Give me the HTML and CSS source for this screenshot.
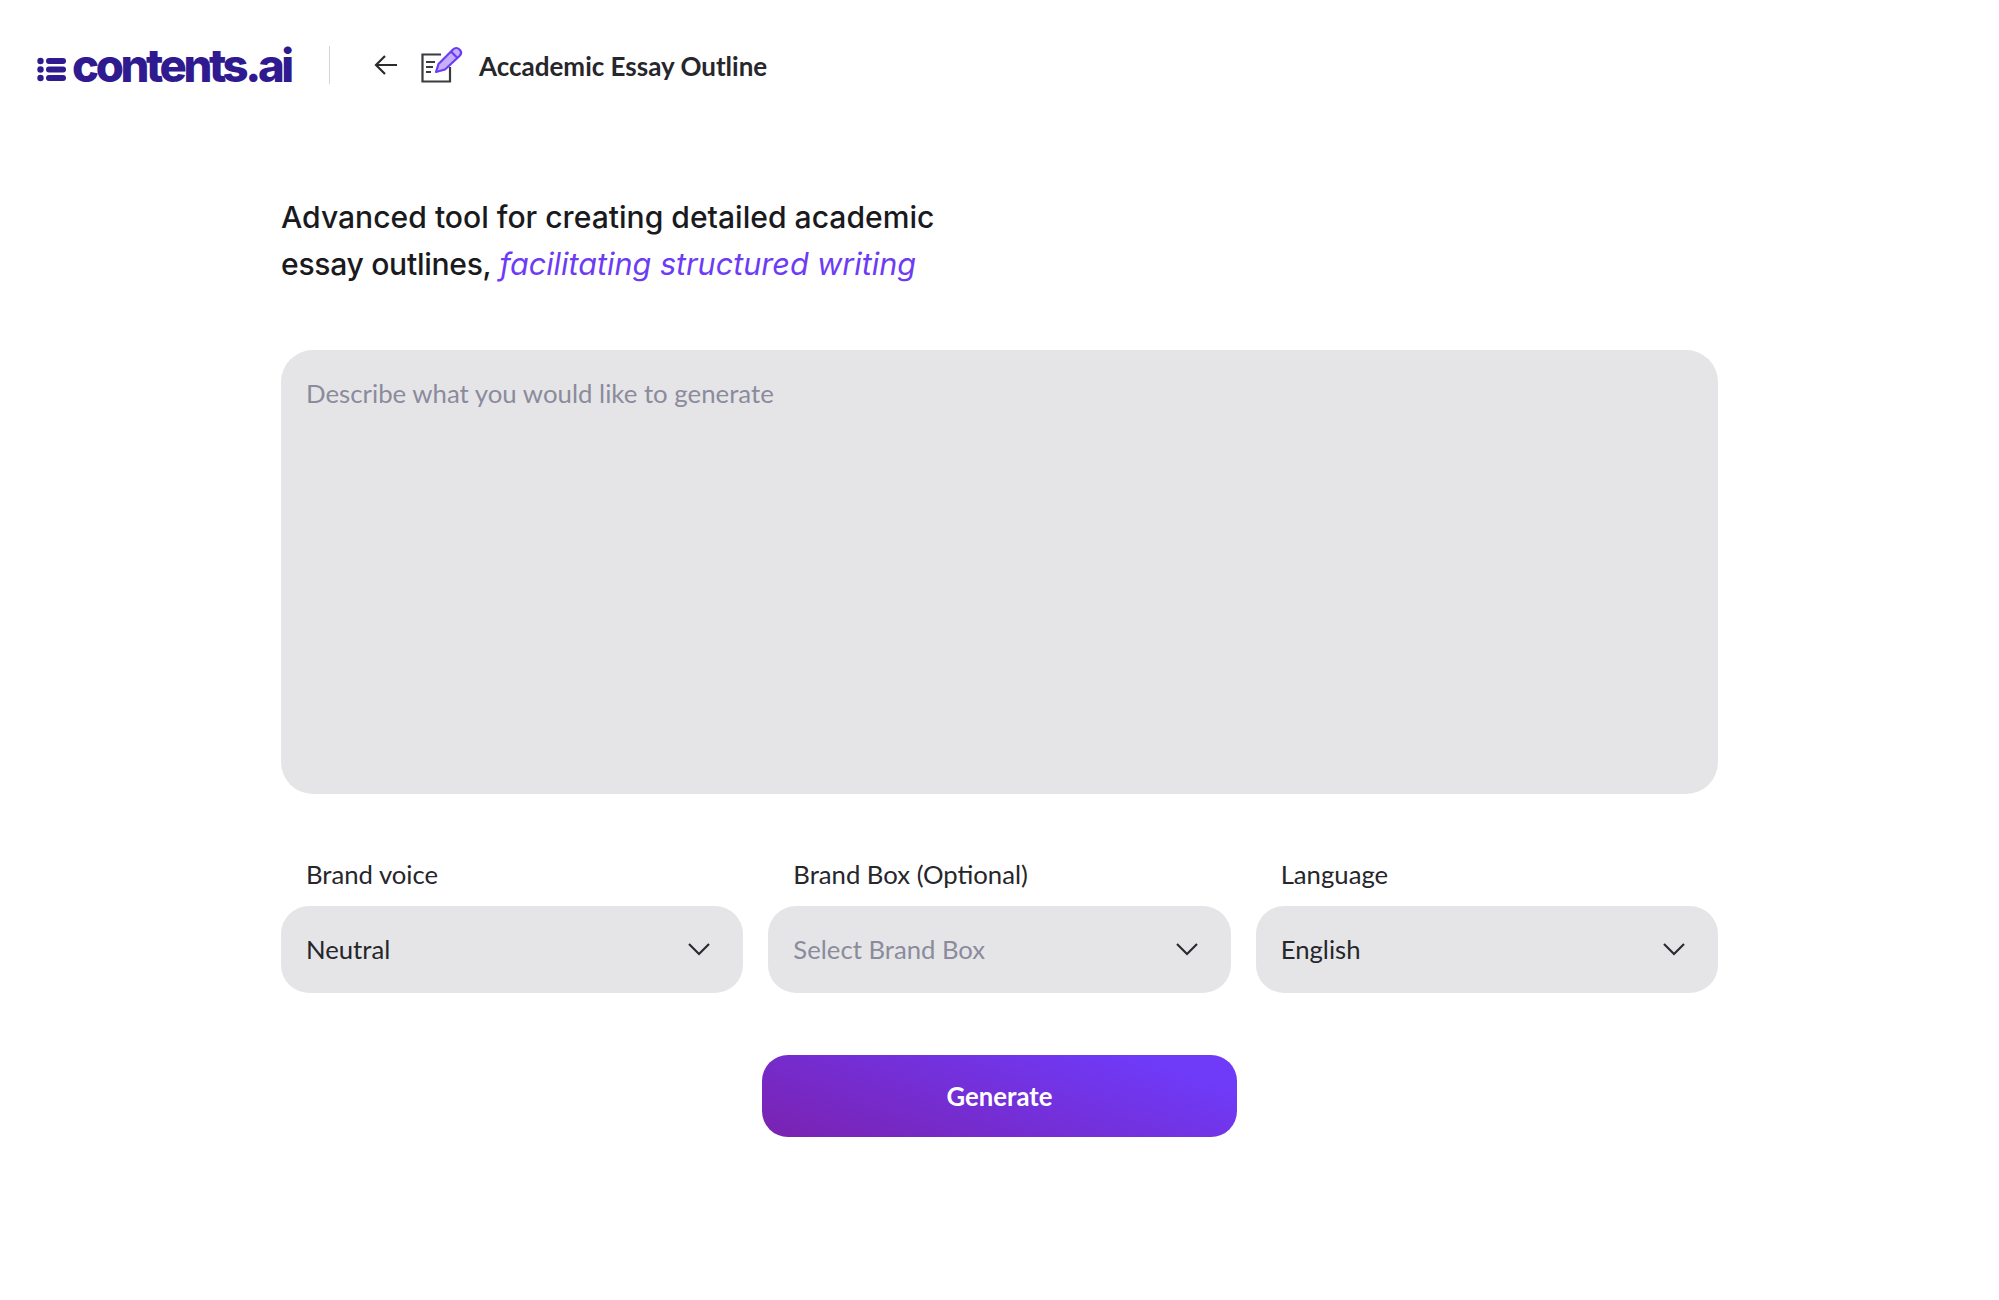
FILE: index.html
```html
<!DOCTYPE html>
<html lang="en">
<head>
<meta charset="utf-8">
<title>Accademic Essay Outline</title>
<link rel="stylesheet" href="styles.css">
</head>
<body>
<header class="topbar">
  <a class="logo">
    <svg class="logo-mark" viewBox="0 0 29 25" aria-hidden="true">
      <circle cx="3.5" cy="4" r="3.2"/><circle cx="3.5" cy="12.5" r="3.2"/><circle cx="3.5" cy="21" r="3.2"/>
      <rect x="9" y="1" width="20" height="6" rx="3"/><rect x="9" y="9.5" width="20" height="6" rx="3"/><rect x="9" y="18" width="20" height="6" rx="3"/>
    </svg>
    <span class="logo-text">contents.ai</span>
  </a>
  <span class="divider"></span>
  <svg class="back" viewBox="0 0 26 24" aria-hidden="true"><path d="M24 12H3M12 3l-9 9 9 9"/></svg>
  <svg class="tool-icon" viewBox="0 0 42 39" aria-hidden="true">
    <path class="ink" d="M20 8.500H1.500V35.500H29V21"/>
    <path class="ink" d="M5 16h9M5 21h7M5 26h5"/>
    <path class="pen" d="M15 26l2.500-8L32 3.500c2-2 4.500-2 6.500 0s2 4.500 0 6.500L24 23.500z"/>
    <path class="pen" d="M30 5.500l6.500 6.500"/>
  </svg>
  <h1 class="title">Accademic Essay Outline</h1>
</header>
<main class="content">
  <p class="intro"><span class="tight">Advanced tool for creating detailed academic</span><br><span class="tighter">essay outlines,</span> <em>facilitating structured writing</em></p>
  <div class="prompt">Describe what you would like to generate</div>
  <div class="fields">
    <div class="field">
      <label class="label">Brand voice</label>
      <div class="select"><span>Neutral</span><svg class="chev" viewBox="0 0 24 14" aria-hidden="true"><path d="M2 2l10 10L22 2"/></svg></div>
    </div>
    <div class="field">
      <label class="label">Brand Box (Optional)</label>
      <div class="select muted"><span>Select Brand Box</span><svg class="chev" viewBox="0 0 24 14" aria-hidden="true"><path d="M2 2l10 10L22 2"/></svg></div>
    </div>
    <div class="field">
      <label class="label">Language</label>
      <div class="select"><span>English</span><svg class="chev" viewBox="0 0 24 14" aria-hidden="true"><path d="M2 2l10 10L22 2"/></svg></div>
    </div>
  </div>
  <button class="generate">Generate</button>
</main>
</body>
</html>
```
FILE: styles.css
```css
* { box-sizing: border-box; }
html, body { margin: 0; background: #fff; }
body { font-family: Lato, "Liberation Sans", sans-serif; color: #1f1f24; min-height: 1300px; }
.topbar { display: flex; align-items: center; height: 130px; padding: 0 0 0 37px; }
.logo { display: flex; align-items: center; width: 255px; margin-top: 2px; color: #2f1a8f; }
.logo-mark { width: 29px; height: 25px; fill: #2f1a8f; margin-top: 7px; flex: none; }
.logo-text { font-family: Inter, "Liberation Sans", sans-serif; font-weight: 800; font-size: 45.500px; letter-spacing: -3.400px; margin-left: 6px; line-height: 1; }
.divider { width: 1px; height: 38px; background: #d4d4d8; margin-left: 37px; }
.back { width: 26px; height: 24px; margin-left: 43px; fill: none; stroke: #2b2b30; stroke-width: 2.200; flex: none; }
.tool-icon { width: 42px; height: 39px; margin-left: 22px; fill: none; flex: none; }
.tool-icon .ink { stroke: #3a3a40; stroke-width: 2.200; fill: none; }
.tool-icon .pen { stroke: #6d3bf5; stroke-width: 2.200; fill: #c4b0fa; stroke-linejoin: round; }
.title { font-size: 26px; font-weight: 700; color: #26262b; margin: 1px 0 0 16px; }
.content { width: 1437px; margin-left: 281px; display: flex; flex-direction: column; }
.intro { font-family: Inter, "Noto Sans", sans-serif; font-weight: 500; font-size: 30.100px; line-height: 46.500px; color: #1a1a1e; margin: 64px 0 0; height: 94px; white-space: nowrap; }
.tighter { letter-spacing: -0.300px; }
.intro em { font-weight: 400; font-style: italic; font-size: 30.600px; color: #6d3bf5; }
.prompt { height: 444px; margin-top: 62px; padding: 26px 25px; background: #e5e5e8; border-radius: 32px; font-size: 25.800px; line-height: 34px; color: #8b8b9c; }
.fields { display: grid; grid-template-columns: repeat(3, 1fr); gap: 25px; margin-top: 63px; }
.field { display: flex; flex-direction: column; }
.label { font-size: 25.700px; line-height: 34px; padding-left: 25px; margin-bottom: 15px; color: #26262b; }
.select { display: flex; align-items: center; justify-content: space-between; height: 87px; padding: 0 32px 2px 25px; background: #e5e5e8; border-radius: 28px; font-size: 25.700px; color: #26262b; }
.select.muted { color: #8b8b9c; }
.chev { width: 24px; height: 14px; fill: none; stroke: #2b2b30; stroke-width: 2.200; }
.generate { align-self: center; width: 475px; height: 82px; margin-top: 62px; border: 0; border-radius: 26px; background: linear-gradient(20deg, #7a22b0 0%, #6f3af8 85%); color: #fff; font-family: Lato, sans-serif; font-weight: 700; font-size: 25.700px; }
```
